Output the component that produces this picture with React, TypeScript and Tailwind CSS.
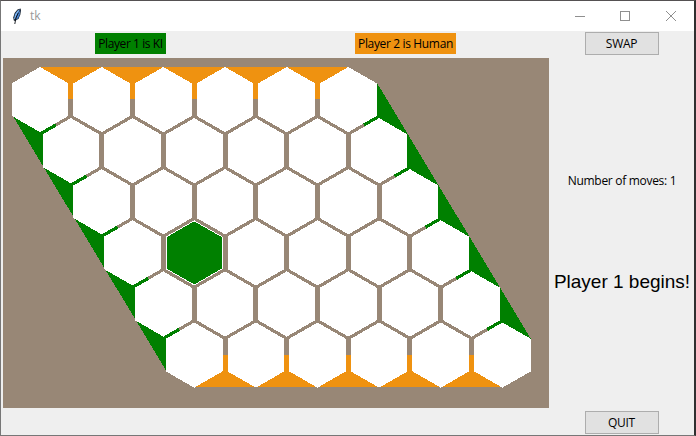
import type { ReactNode } from "react";

const SIZE = 6;
const CELL_STEP = 61.65;
const ROW_SHIFT = 30.825;
const ROW_STEP = 51.1;
const ORIGIN = { x: 37.07, y: 41.6 };

const ui = "font-['Open_Sans','Noto_Sans',sans-serif] text-[12px] leading-[15px]";

function hexPoints(cx: number, cy: number, inset = 0): string {
  const w = 28.325 - inset;
  const h = 32.6 - inset * 1.15;
  const s = h / 2;
  return [
    [cx, cy - h],
    [cx + w, cy - s],
    [cx + w, cy + s],
    [cx, cy + h],
    [cx - w, cy + s],
    [cx - w, cy - s],
  ]
    .map((p) => p.join(","))
    .join(" ");
}

function Board() {
  const cells: ReactNode[] = [];
  for (let row = 0; row < SIZE; row++) {
    for (let col = 0; col < SIZE; col++) {
      const cx = ORIGIN.x + col * CELL_STEP + row * ROW_SHIFT;
      const cy = ORIGIN.y + row * ROW_STEP;
      cells.push(<polygon key={`${row}-${col}`} points={hexPoints(cx, cy)} fill="#fff" />);
      if (row === 3 && col === 1) {
        cells.push(<polygon key="taken" points={hexPoints(cx, cy, 0.9)} fill="#008000" />);
      }
    }
  }
  return (
    <svg width="546" height="350" viewBox="0 0 546 350" shapeRendering="crispEdges" className="block shrink-0 bg-[#988776]">
      <g fill="#ef9210">
        <polygon points="37.5,9 345.5,9 345.5,41 37.5,41" />
        <polygon points="191.5,297 499.5,297 499.5,329 191.5,329" />
      </g>
      <g fill="#008000">
        <polygon points="9.5,57.5 37.5,41.5 191.5,297 164,314" />
        <polygon points="374,25 345.5,41.5 499.5,297 528,281" />
      </g>
      {cells}
    </svg>
  );
}

function Feather() {
  return (
    <svg width="10" height="17" viewBox="0 0 10 17" className="ml-[11px]">
      <path d="M8.6 .6 5.5 1.6 2.6 5 1.2 9.5 1.8 12.5 3 13 6.6 10.8 8.3 6.8 9 2.4Z" fill="#16202c" />
      <path d="M8 1.3 5.4 2.8 3 6.2 2 10.7 3 11.6 5 7Z" fill="#78b0f0" />
      <path d="M8.3 2.4 6.4 5 4.4 9.8 3.7 12 6.2 10.3 7.7 6.6Z" fill="#4580d0" />
      <path d="M6.2 5 4 9.6 2.8 16" fill="none" stroke="#080c12" strokeWidth=".9" />
    </svg>
  );
}

function TitleBar() {
  return (
    <header className="flex h-[30px] shrink-0 items-center bg-white">
      <Feather />
      <span className="ml-[8px] font-['Open_Sans','Noto_Sans',sans-serif] text-[12px] leading-none text-[#999]">tk</span>
      <svg width="104" height="12" viewBox="0 0 104 12" fill="none" stroke="#8f8f8f" className="mr-[16px] ml-auto">
        <path d="M1 6.5h10" />
        <rect x="46.5" y="1.5" width="9" height="9" />
        <path d="M92 1l10 10M102 1L92 11" />
      </svg>
    </header>
  );
}

function TkButton({ children }: { children: ReactNode }) {
  return (
    <button className={`flex h-[23px] w-[74px] items-center justify-center border border-[#adadad] bg-[#e1e1e1] text-black ${ui}`}>
      {children}
    </button>
  );
}

export default function App() {
  return (
    <div className="h-[436px] w-[696px] overflow-hidden border-t border-r-2 border-b border-l border-t-[#555152] border-r-[#303030] border-b-[#777] border-l-[#777]">
      <div className="flex h-full flex-col bg-[#efefef]">
        <TitleBar />
        <main className="flex flex-1 pl-[2px]">
          <section className="flex w-[546px] flex-col">
            <div className="flex h-[27px] items-start pt-[2px] pl-[92px]">
              <div className={`flex h-[21px] w-[71px] items-center justify-center bg-[#008000] whitespace-nowrap tracking-[-0.42px] ${ui}`}>
                Player 1 is KI
              </div>
              <div className={`ml-[189px] flex h-[21px] w-[101px] items-center justify-center bg-[#ef9210] whitespace-nowrap tracking-[-0.35px] ${ui}`}>
                Player 2 is Human
              </div>
            </div>
            <Board />
          </section>
          <aside className="flex flex-1 flex-col items-center pt-px">
            <TkButton>
              <span className="tracking-[-0.3px]">SWAP</span>
            </TkButton>
            <p className={`mt-[118px] pl-px whitespace-nowrap tracking-[-0.3px] ${ui}`}>Number of moves: 1</p>
            <p className="mt-[83px] pl-px font-['Liberation_Sans',Arial,sans-serif] text-[19px] leading-[22px] whitespace-nowrap">
              Player 1 begins!
            </p>
            <div className="mt-auto mb-px">
              <TkButton>
                <span className="tracking-[-0.3px]">QUIT</span>
              </TkButton>
            </div>
          </aside>
        </main>
      </div>
    </div>
  );
}
